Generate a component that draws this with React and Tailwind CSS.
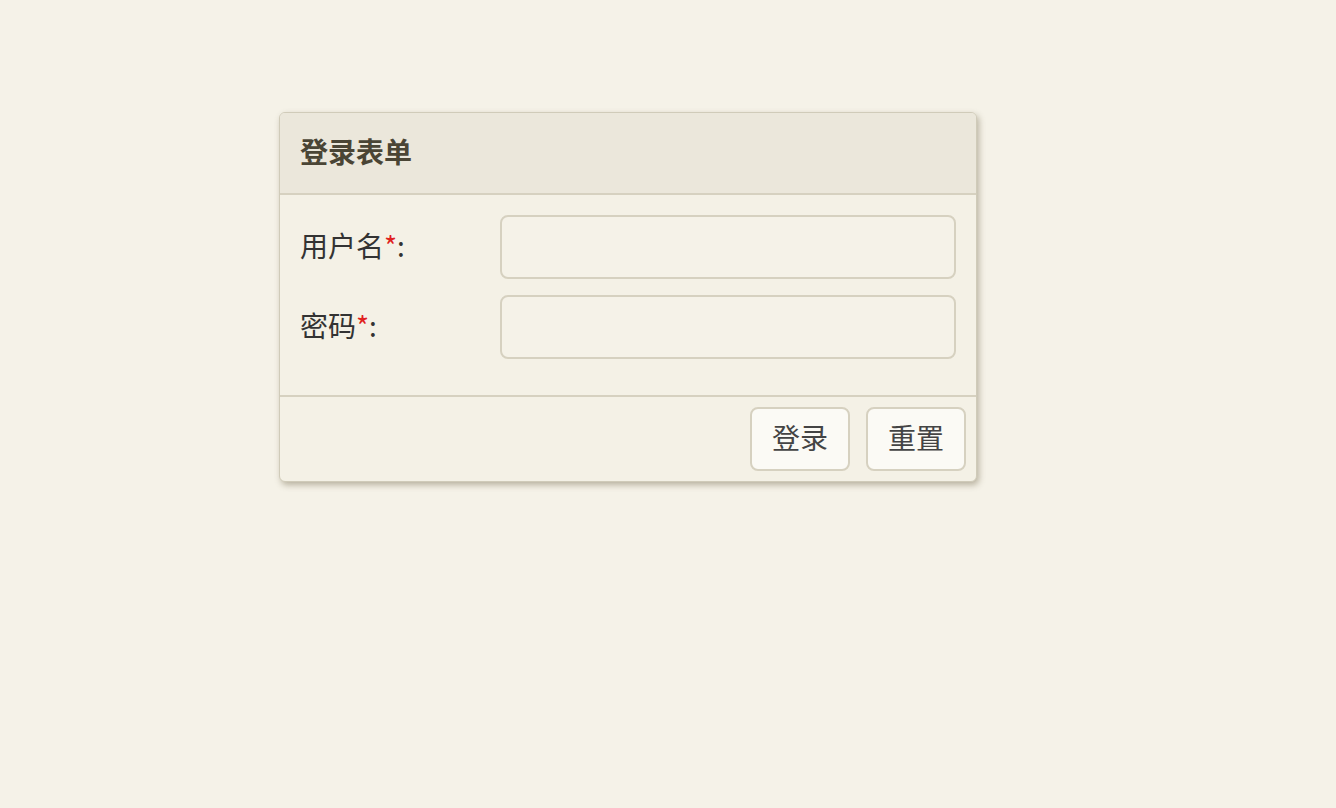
export default function App() {
  const fields = [
    { label: '用户名', type: 'text' },
    { label: '密码', type: 'password' },
  ];

  return (
    <div
      className="min-h-screen w-full bg-[#f5f2e8] pt-[112px] pl-[279px]"
      style={{ fontFamily: '"Noto Sans CJK SC", "Liberation Sans", sans-serif' }}
    >
      <div className="w-[698px] rounded-md border border-[#d0cbb9] bg-[#f4f1e6] shadow-[2px_3px_6px_rgba(110,100,70,0.45)] overflow-hidden">
        <div className="h-[82px] flex items-center px-5 pb-1 bg-[#ebe7db] border-b-2 border-[#d6d1c0]">
          <h1 className="text-[28px] font-bold text-[#4a4535] leading-none">登录表单</h1>
        </div>

        <form onSubmit={(e) => e.preventDefault()}>
          <div className="px-5 pt-5 pb-9 flex flex-col gap-4">
            {fields.map((f) => (
              <div key={f.label} className="flex items-center">
                <label className="w-[200px] pb-1 text-[28px] text-[#333333] leading-none">
                  {f.label}
                  <span className="text-[#e02020]">*</span>:
                </label>
                <input
                  type={f.type}
                  className="flex-1 h-[64px] rounded-lg border-2 border-[#d6d1c0] bg-[#f5f2e8] px-3 text-[24px] outline-none"
                />
              </div>
            ))}
          </div>

          <div className="border-t-2 border-[#d6d1c0] flex justify-end gap-4 p-2.5">
            <button
              type="submit"
              className="w-[100px] h-[64px] pb-1 rounded-lg border-2 border-[#d6d1c0] bg-[#fbfaf5] text-[28px] text-[#444444] leading-none"
            >
              登录
            </button>
            <button
              type="reset"
              className="w-[100px] h-[64px] pb-1 rounded-lg border-2 border-[#d6d1c0] bg-[#fbfaf5] text-[28px] text-[#444444] leading-none"
            >
              重置
            </button>
          </div>
        </form>
      </div>
    </div>
  );
}
